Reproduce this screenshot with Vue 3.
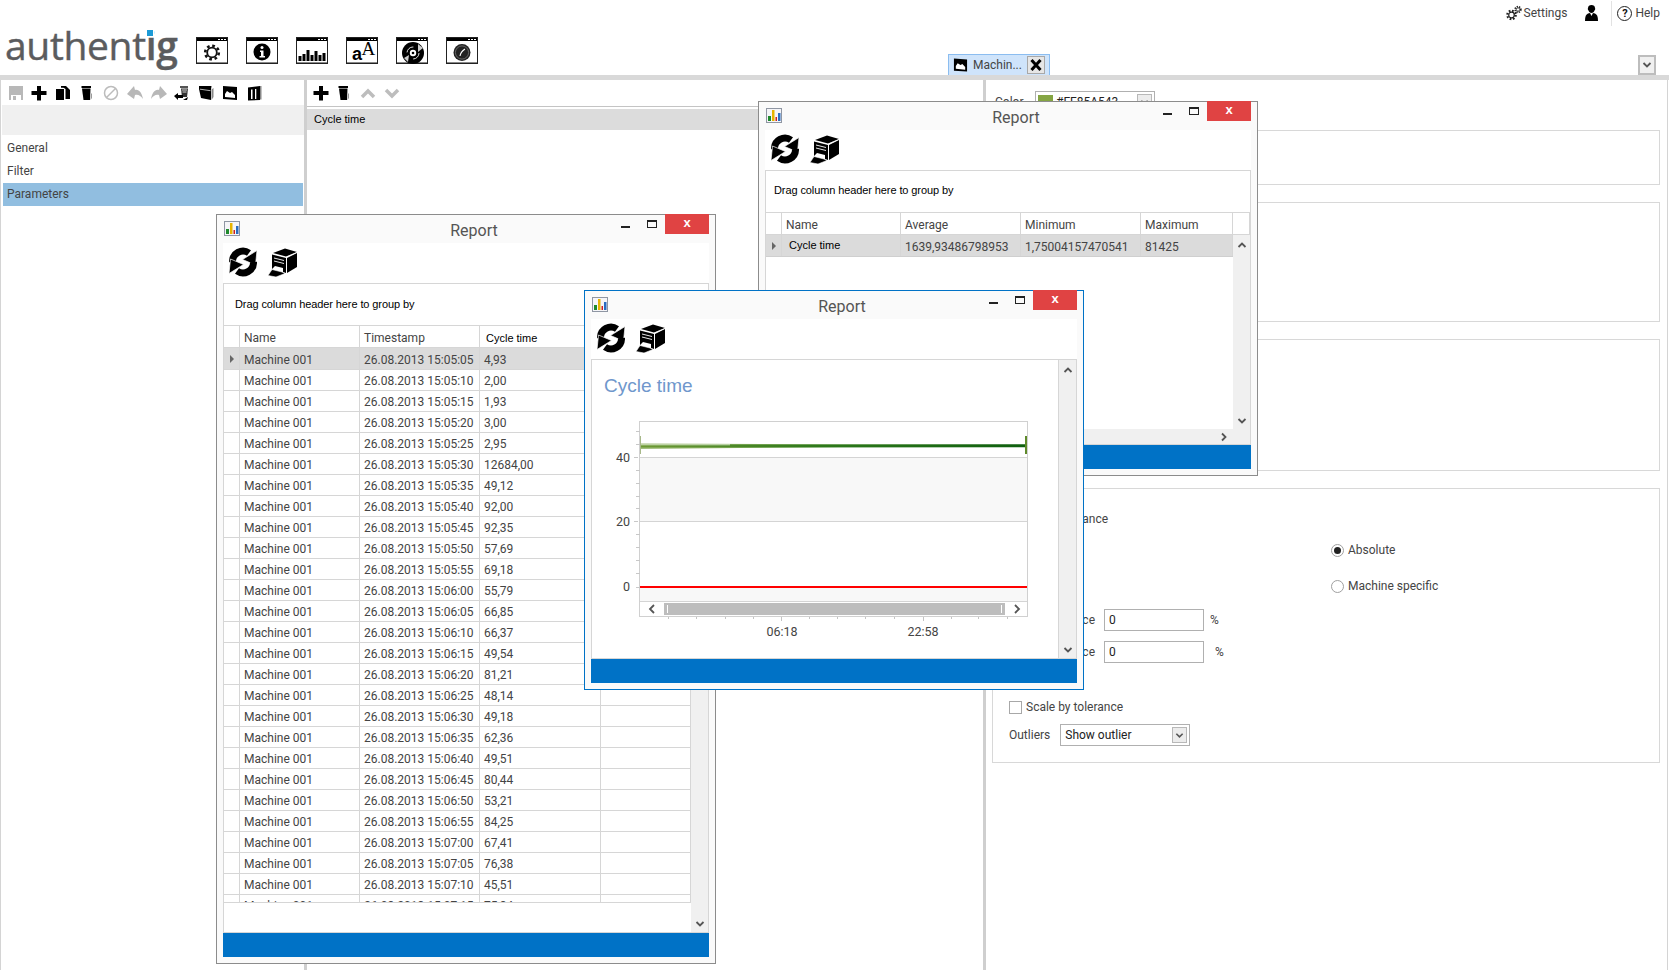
<template>
  <div class="app">
    <svg class="sprite" aria-hidden="true">
      <defs>
        <symbol id="frame" viewBox="0 0 32 27">
          <rect x="0.5" y="0.5" width="31" height="26" fill="#fff" stroke="#222" />
          <rect x="1" y="1" width="30" height="3" fill="#000" />
          <path d="M22 2h2v1h-2zM25 2h2v1h-2zM28 2h2v1h-2z" fill="#fff" />
          <path d="M1 25.500h30" stroke="#888" />
        </symbol>
        <symbol id="save" viewBox="0 0 16 16">
          <path fill="#b8b8b8" d="M1 1h14v14H1z" />
          <path fill="#fff" d="M3 10h10v5H3z" />
          <path fill="#b8b8b8" d="M5 11h3v4H5z" />
        </symbol>
        <symbol id="plus" viewBox="0 0 16 16">
          <path d="M6 1h4v5h5.500v4H10v5.500H6V10H.5V6H6z" />
        </symbol>
        <symbol id="copy" viewBox="0 0 16 16">
          <path d="M1 4h8v11H1z" />
          <path d="M6 1h5l4 4v9h-4.500V4L8.500 2.800H6z" />
        </symbol>
        <symbol id="trash" viewBox="0 0 16 16">
          <path d="M2.500 1h9.500v2H2.500z" />
          <path d="M3 3.500h8.500l-.5 11.500H4.500z" />
          <path d="M12 9l1-1v5l-1.500 2z" fill="#999" />
        </symbol>
        <symbol id="forbid" viewBox="0 0 16 16">
          <circle cx="8" cy="8" r="6.500" fill="none" stroke="#bcbcbc" stroke-width="1.500" />
          <path d="M3.500 12.500l9-9" stroke="#bcbcbc" stroke-width="1.500" />
        </symbol>
        <symbol id="undo" viewBox="0 0 16 16">
          <path fill="#b8b8b8" d="M0 9l7-8 1 4c4-1 7 3 8 9-2-3-5-5-8-4l-1 4z" />
        </symbol>
        <symbol id="redo" viewBox="0 0 16 16">
          <path fill="#b8b8b8" d="M16 9L9 1 8 5C4 4 1 8 0 14c2-3 5-5 8-4l1 4z" />
        </symbol>
        <symbol id="recycle" viewBox="0 0 16 16">
          <path d="M6 1h8v2H6z" fill="#555" />
          <path d="M7 3.500h7l-1 8.500H8z" fill="#333" />
          <path d="M8 5h5M8.500 7h4" stroke="#fff" stroke-width=".8" />
          <path d="M0 11l4-3v2h5v3H4v2z" />
          <path d="M9 15l5-3-1 3z" />
        </symbol>
        <symbol id="book" viewBox="0 0 16 16">
          <path d="M1 1h12.500L13 4.500V15L3 13 1 4z" />
          <path d="M13.500 4.500l2-1.500v9l-2 3z" fill="#888" />
          <path d="M2 4.200l10.500 1.500" stroke="#fff" stroke-width=".7" />
        </symbol>
        <symbol id="machine" viewBox="0 0 16 16">
          <path d="M1 1l14 1v13L1 14z" />
          <path d="M3 9l2-3 3 2 2-1 3 3v3L3 12z" fill="#fff" />
        </symbol>
        <symbol id="columns" viewBox="0 0 16 16">
          <path d="M2 2.500L14 1v14l-12 .5z" />
          <path d="M5 4.500h1.500V14H5zM9 4h1.300v10H9z" fill="#fff" />
          <path d="M14 1h1.500v13.500H14z" fill="#888" />
        </symbol>
        <symbol id="chevUp" viewBox="0 0 16 16">
          <path d="M2 12l6-6 6 6" fill="none" stroke="#bdbdbd" stroke-width="3.500" />
        </symbol>
        <symbol id="chevDown" viewBox="0 0 16 16">
          <path d="M2 5l6 6 6-6" fill="none" stroke="#bdbdbd" stroke-width="3.500" />
        </symbol>
        <symbol id="refresh" viewBox="0 0 28 30">
          <path d="M3.500 15A10.500 10.500 0 0 1 20 6" fill="none" stroke="#000" stroke-width="7" />
          <path d="M28 3.500L26.500 18 13.500 12.500z" stroke="#fff" stroke-width=".7" />
          <path d="M24.500 15A10.500 10.500 0 0 1 8 24" fill="none" stroke="#000" stroke-width="7" />
          <path d="M0 26.500L1.500 12 14.500 17.500z" stroke="#fff" stroke-width=".7" />
        </symbol>
        <symbol id="printer" viewBox="0 0 29 29">
          <path d="M5 5l12-4.500L29 4 18 8.500z" />
          <path d="M4 6.500l14 3.500v15l-3-1v-4l-8-2-3 3z" />
          <path d="M19 10l10-5v14l-10 6z" />
          <path d="M6 10l10 2.500M6 13l10 2.500" stroke="#fff" stroke-width=".9" />
          <path d="M18 9.300l11-5" stroke="#fff" stroke-width=".6" />
          <path d="M0 27.500l4-6 10 2.500 3 1.500L8 29z" stroke="#fff" stroke-width=".6" />
        </symbol>
        <symbol id="reportIcon" viewBox="0 0 16 15">
          <rect x=".5" y=".5" width="15" height="14" fill="#f5f5f8" stroke="#8f96a3" />
          <path d="M2 8h3v5H2z" fill="#1f8a2d" />
          <path d="M6 2h2.500v11H6z" fill="#e8b400" />
          <path d="M9.500 9H11v4H9.500z" fill="#cc2020" />
          <path d="M12 5h2.500v8H12z" fill="#2a6cc0" />
        </symbol>
        <symbol id="chev" viewBox="0 0 10 10">
          <path d="M1.500 7L5 3.500 8.500 7" fill="none" stroke="#555" stroke-width="1.800" />
        </symbol>
      </defs>
    </svg>

    <header class="topbar">
      <div class="brand">
        <div class="logo">authent<b>ig</b><i class="logo-dot"></i></div>
        <div class="apps">
          <svg class="app-icon" viewBox="0 0 32 27">
            <use href="#frame" width="32" height="27" />
            <circle cx="16" cy="15.500" r="6.800" fill="none" stroke="#111" stroke-width="2.600" stroke-dasharray="2.700 2.640" />
            <circle cx="16" cy="15.500" r="4.800" fill="none" stroke="#111" stroke-width="1.800" />
          </svg>
          <svg class="app-icon" viewBox="0 0 32 27">
            <use href="#frame" width="32" height="27" />
            <circle cx="16" cy="15" r="8.500" />
            <circle cx="16" cy="10.500" r="1.500" fill="#fff" />
            <path d="M14 13.500h3.500V19H19v1.500h-5.500V19H15v-4h-1z" fill="#fff" />
          </svg>
          <svg class="app-icon" viewBox="0 0 32 27">
            <use href="#frame" width="32" height="27" />
            <path d="M2.500 19h3v5h-3zM6.500 17h3v7h-3zM10.500 13h3v11h-3zM14.500 18h3v6h-3zM18.500 14h3v10h-3zM22.500 18h3v6h-3zM26.500 16h3v8h-3z" />
          </svg>
          <svg class="app-icon" viewBox="0 0 32 27">
            <use href="#frame" width="32" height="27" />
            <text x="6" y="23" class="icon-a">a</text>
            <text x="15.500" y="18" class="icon-aa">A</text>
          </svg>
          <svg class="app-icon" viewBox="0 0 32 27">
            <use href="#frame" width="32" height="27" />
            <circle cx="17" cy="16" r="11" />
            <circle cx="17" cy="16" r="6" fill="none" stroke="#ddd" stroke-width="1" stroke-dasharray="9 10" />
            <path d="M22 7l5 4-5 4zM12 25l-4-4 5-3z" fill="#ccc" />
            <circle cx="17" cy="16" r="3.200" fill="#fff" />
            <circle cx="17" cy="16" r="1.300" />
          </svg>
          <svg class="app-icon" viewBox="0 0 32 27">
            <use href="#frame" width="32" height="27" />
            <circle cx="16" cy="15.500" r="8.500" fill="#222" />
            <circle cx="16" cy="15.500" r="6.600" fill="none" stroke="#777" stroke-width=".8" />
            <path d="M14 19c.5-3 2-5 5-7" fill="none" stroke="#fff" stroke-width="1.100" />
          </svg>
        </div>
      </div>
      <div class="top-right">
        <nav class="links">
          <span class="link">
            <svg width="16" height="16" viewBox="0 0 16 16">
              <circle cx="5.500" cy="10" r="4.200" fill="none" stroke="#222" stroke-width="2.200" stroke-dasharray="1.700 1.600" />
              <circle cx="5.500" cy="10" r="2.800" fill="none" stroke="#222" stroke-width="1.200" />
              <circle cx="12" cy="4.500" r="2.800" fill="none" stroke="#222" stroke-width="1.800" stroke-dasharray="1.300 1" />
              <circle cx="12" cy="4.500" r="1.700" fill="none" stroke="#222" stroke-width=".8" />
            </svg>
            Settings
          </span>
          <svg class="person" width="13" height="16" viewBox="0 0 13 16">
            <path d="M3 3c0-2 1.500-3 3.500-3S10 1 10 3c.5 1 0 2-.5 2.500C9 7 8 8 6.500 8S4 7 3.500 5.500C3 5 2.500 4 3 3z" />
            <path d="M3 8.500l2-.5 1.500 3L8 8l2 .5c2 .8 3 3 3 7.500H0c0-4.500 1-6.700 3-7.500z" />
          </svg>
          <span class="link help"><em class="help-mark">?</em>Help</span>
        </nav>
        <div class="tabstrip">
          <div class="tab">
            <svg width="15" height="16"><use href="#machine" width="15" height="16" /></svg>
            <span>Machin...</span>
            <span class="tab-close">
              <svg width="14" height="14" viewBox="0 0 14 14">
                <path d="M2.500 2l9 10M11.500 2l-9 10" stroke="#000" stroke-width="3" />
              </svg>
            </span>
          </div>
          <span class="strip-menu"><svg width="10" height="10"><use href="#chev" width="10" height="10" transform="rotate(180 5 5)" /></svg></span>
        </div>
      </div>
    </header>
    <div class="band"></div>

    <main class="workspace">
      <section class="nav-col">
        <div class="tools">
          <svg v-for="icon in leftTools" :key="icon" class="tool"><use :href="'#' + icon" width="16" height="16" /></svg>
        </div>
        <div class="nav-head"></div>
        <ul class="nav">
          <li>General</li>
          <li>Filter</li>
          <li class="active">Parameters</li>
        </ul>
      </section>

      <section class="param-col">
        <div class="tools">
          <svg v-for="icon in ['plus', 'trash', 'chevUp', 'chevDown']" :key="icon" class="tool"><use :href="'#' + icon" width="16" height="16" /></svg>
        </div>
        <div class="param-list">
          <div class="param-row">Cycle time</div>
        </div>
      </section>

      <section class="props-col">
        <div class="color-row">
          <span class="color-label">Color</span>
          <span class="combo color-combo">
            <i class="swatch"></i>#FF85A543
            <span class="combo-btn"><svg width="9" height="9"><use href="#chev" width="9" height="9" transform="rotate(180 4.500 4.500)" /></svg></span>
          </span>
        </div>
        <div class="group group-a"></div>
        <div class="group group-b"></div>
        <div class="group group-c"></div>
        <div class="group group-d">
          <label class="check-row first"><i class="check"></i>Show tolerance</label>
          <label class="radio-row"><i class="radio on"></i>Absolute</label>
          <label class="radio-row second"><i class="radio"></i>Machine specific</label>
          <div class="tol-row">
            <span class="tol-label">Upper tolerance</span>
            <span class="field">0</span>
            <span class="pct">%</span>
          </div>
          <div class="tol-row lower">
            <span class="tol-label">Lower tolerance</span>
            <span class="field">0</span>
            <span class="pct wide">%</span>
          </div>
          <label class="check-row scale"><i class="check"></i>Scale by tolerance</label>
          <div class="outliers">
            <span>Outliers</span>
            <span class="combo outlier-combo">
              Show outlier
              <span class="combo-btn"><svg width="9" height="9"><use href="#chev" width="9" height="9" transform="rotate(180 4.500 4.500)" /></svg></span>
            </span>
          </div>
        </div>
      </section>
    </main>

    <!-- raw values window -->
    <div class="win win-raw">
      <div class="win-title">
        <svg class="win-icon"><use href="#reportIcon" width="16" height="15" /></svg>
        <span class="win-name">Report</span>
        <div class="win-btns"><i class="w-min"></i><i class="w-max"></i><span class="w-close">x</span></div>
      </div>
      <div class="win-tools">
        <svg class="w-refresh"><use href="#refresh" width="28" height="30" /></svg>
        <svg class="w-print"><use href="#printer" width="29" height="29" /></svg>
      </div>
      <div class="win-body">
        <div class="drag-hint">Drag column header here to group by</div>
        <div class="grid-row grid-head raw-cols">
          <span></span><span>Name</span><span>Timestamp</span><span class="black low">Cycle time</span><span></span>
        </div>
        <div class="raw-main">
          <div class="raw-rows">
            <div v-for="(row, i) in rawRows" :key="row.time" class="grid-row raw-cols" :class="{ sel: i === 0 }">
              <span class="selector"><i v-if="i === 0" class="caret"></i></span>
              <span>Machine 001</span><span>{{ row.time }}</span><span>{{ row.value }}</span><span></span>
            </div>
          </div>
          <div class="vscroll">
            <svg class="sb-up"><use href="#chev" width="10" height="10" /></svg>
            <svg class="sb-down"><use href="#chev" width="10" height="10" /></svg>
          </div>
        </div>
      </div>
      <div class="win-status"></div>
    </div>

    <!-- summary window -->
    <div class="win win-sum">
      <div class="win-title">
        <svg class="win-icon"><use href="#reportIcon" width="16" height="15" /></svg>
        <span class="win-name">Report</span>
        <div class="win-btns"><i class="w-min"></i><i class="w-max"></i><span class="w-close">x</span></div>
      </div>
      <div class="win-tools">
        <svg class="w-refresh"><use href="#refresh" width="28" height="30" /></svg>
        <svg class="w-print"><use href="#printer" width="29" height="29" /></svg>
      </div>
      <div class="win-body">
        <div class="drag-hint">Drag column header here to group by</div>
        <div class="grid-row grid-head sum-cols">
          <span></span><span>Name</span><span>Average</span><span>Minimum</span><span>Maximum</span><span></span>
        </div>
        <div class="sum-main">
          <div class="sum-rows">
            <div class="grid-row sum-cols sel">
              <span class="selector"><i class="caret"></i></span>
              <span class="black">Cycle time</span><span>1639,93486798953</span><span>1,75004157470541</span><span>81425</span>
            </div>
          </div>
          <div class="vscroll">
            <svg class="sb-up"><use href="#chev" width="10" height="10" /></svg>
            <svg class="sb-down"><use href="#chev" width="10" height="10" /></svg>
          </div>
        </div>
        <div class="hscroll">
          <svg class="sb-right"><use href="#chev" width="10" height="10" /></svg>
        </div>
      </div>
      <div class="win-status"></div>
    </div>

    <!-- chart window -->
    <div class="win win-chart">
      <div class="win-title">
        <svg class="win-icon"><use href="#reportIcon" width="16" height="15" /></svg>
        <span class="win-name">Report</span>
        <div class="win-btns"><i class="w-min"></i><i class="w-max"></i><span class="w-close">x</span></div>
      </div>
      <div class="win-tools">
        <svg class="w-refresh"><use href="#refresh" width="28" height="30" /></svg>
        <svg class="w-print"><use href="#printer" width="29" height="29" /></svg>
      </div>
      <div class="win-body chart-body">
        <div class="chart-pane">
          <div class="chart-title">Cycle time</div>
          <svg class="chart" viewBox="0 0 468 260">
            <defs>
              <linearGradient id="lineFill" x1="0" x2="1" y1="0" y2="0">
                <stop offset="0" stop-color="#6e9a34" />
                <stop offset="0.45" stop-color="#2f7a1c" />
                <stop offset="1" stop-color="#0f5f0f" />
              </linearGradient>
            </defs>
            <rect x="49.500" y="23.500" width="388" height="195" fill="#fff" stroke="#d0d0d0" />
            <rect x="50" y="60" width="387" height="63" fill="#f8f8f8" />
            <rect x="50" y="189" width="387" height="14" fill="#f8f8f8" />
            <path d="M50 59.500h387M50 123.500h387M50 203.500h387" stroke="#d4d4d4" />
            <path v-for="t in yTicks" :key="t" :d="`M${t % 64 === 59 % 64 ? 44 : 46} ${t}.5h4`" stroke="#c8c8c8" />
            <path d="M50 45.500L250 46.500 437 47v2L250 49 50 51z" fill="#7ea64a" opacity=".75" />
            <path d="M50 48L437 47.800" stroke="url(#lineFill)" stroke-width="3" />
            <path d="M50 46.800h90" stroke="#eef4e4" stroke-width=".8" />
            <path d="M50.500 38v18" stroke="#a8b98a" />
            <path d="M436 38v18" stroke="#5e8a2a" stroke-width="2" />
            <path d="M50 189h387" stroke="#f00" stroke-width="2" />
            <rect x="74" y="205" width="341" height="12" fill="#bdbdbd" />
            <path d="M77.500 207v8M411.500 207v8" stroke="#fff" />
            <path d="M64 207l-4 4 4 4M425 207l4 4-4 4" fill="none" stroke="#555" stroke-width="1.800" />
            <path v-for="x in xTicks" :key="x" :d="`M${x}.5 219v${x === 191 || x === 333 ? 4 : 2}`" stroke="#c4c4c4" />
            <text x="40" y="64" class="axis" text-anchor="end">40</text>
            <text x="40" y="128" class="axis" text-anchor="end">20</text>
            <text x="40" y="193" class="axis" text-anchor="end">0</text>
            <text x="192" y="238" class="axis" text-anchor="middle">06:18</text>
            <text x="333" y="238" class="axis" text-anchor="middle">22:58</text>
          </svg>
        </div>
        <div class="vscroll full">
          <svg class="sb-up"><use href="#chev" width="10" height="10" /></svg>
          <svg class="sb-down"><use href="#chev" width="10" height="10" /></svg>
        </div>
      </div>
      <div class="win-status"></div>
    </div>
  </div>
</template>

<script setup>
const leftTools = ["save", "plus", "copy", "trash", "forbid", "undo", "redo", "recycle", "book", "machine", "columns"]

const cycleValues = [
  "4,93", "2,00", "1,93", "3,00", "2,95", "12684,00", "49,12", "92,00", "92,35",
  "57,69", "69,18", "55,79", "66,85", "66,37", "49,54", "81,21", "48,14", "49,18",
  "62,36", "49,51", "80,44", "53,21", "84,25", "67,41", "76,38", "45,51", "75,84",
]

function stamp(i) {
  const total = 15 * 3600 + 5 * 60 + 5 + i * 5
  const m = String(Math.floor(total / 60) % 60).padStart(2, "0")
  const s = String(total % 60).padStart(2, "0")
  return `26.08.2013 15:${m}:${s}`
}

const rawRows = cycleValues.map((value, i) => ({ time: stamp(i), value }))

// ticks of the chart, in svg units
const yTicks = [59 - 12.8 * 2, 59 - 12.8, 59, 72, 85, 98, 110, 123, 136, 149, 162, 175, 189].map(Math.round)
const xTicks = [78, 106, 135, 163, 191, 219, 247, 275, 304, 333, 361, 388, 417]
</script>

<style>
html, body {
  margin: 0;
  background: #fff;
  overflow: hidden;
}
</style>

<style scoped>
.app {
  position: relative;
  width: 1669px;
  height: 970px;
  overflow: hidden;
  background: #fff;
  font-family: Roboto, "Open Sans", sans-serif;
  font-size: 12px;
  color: #444;
}

.sprite {
  position: absolute;
  width: 0;
  height: 0;
}

.topbar {
  display: grid;
  grid-template-columns: 948px 1fr;
  height: 75px;
}

.brand {
  display: flex;
  padding-left: 5px;
}

.logo {
  position: relative;
  width: 191px;
  margin-top: 19px;
  font-family: "Open Sans", sans-serif;
  font-size: 39px;
  line-height: 52px;
  letter-spacing: -0.35px;
  color: #5b5c5e;
  height: 52px;
  -webkit-text-stroke: 0.4px #5b5c5e;
}

.logo b {
  font-weight: 600;
}

.logo-dot {
  position: absolute;
  left: 142px;
  top: 11px;
  width: 6px;
  height: 6px;
  background: #1c9ad6;
  box-shadow: 0 0 0 1px #fff;
}

.apps {
  display: flex;
  gap: 18px;
  padding-top: 37px;
}

.app-icon {
  width: 32px;
  height: 27px;
}

.icon-a {
  font: 700 18px "Liberation Sans", sans-serif;
}

.icon-aa {
  font: 400 19px "Liberation Serif", serif;
}

.top-right {
  display: flex;
  flex-direction: column;
  justify-content: space-between;
}

.links {
  display: flex;
  justify-content: flex-end;
  align-items: center;
  height: 26px;
  padding-right: 9px;
}

.link {
  display: flex;
  align-items: center;
  gap: 2px;
}

.person {
  margin: 0 13px 0 18px;
}

.help {
  border-left: 1px solid #e2e2e2;
  height: 25px;
  padding-left: 5px;
  gap: 3px;
}

.help-mark {
  display: inline-block;
  width: 13px;
  height: 13px;
  border: 1.500px solid #222;
  border-radius: 50%;
  font-style: normal;
  font-weight: 700;
  font-size: 11px;
  line-height: 13px;
  text-align: center;
  color: #111;
}

.tabstrip {
  display: flex;
  align-items: flex-end;
  justify-content: space-between;
  padding-right: 13px;
}

.tab {
  display: flex;
  align-items: center;
  box-sizing: border-box;
  width: 102px;
  height: 21px;
  padding-left: 4px;
  gap: 5px;
  background: #cfe4fb;
  border: 1px solid #8bbdf0;
  border-bottom: 0;
  font-size: 12px;
}

.tab-close {
  display: flex;
  align-items: center;
  justify-content: center;
  width: 16px;
  height: 16px;
  background: #e6e6e6;
  border: 1px solid #a8a8a8;
}

.strip-menu {
  display: flex;
  align-items: center;
  justify-content: center;
  box-sizing: border-box;
  width: 18px;
  height: 20px;
  border: 2px solid #bdbdbd;
  background: #f0f0f0;
}

.band {
  height: 5px;
  background: #d9d9d9;
}

.workspace {
  display: grid;
  grid-template-columns: 304px 681px 1fr;
  height: 890px;
  box-sizing: border-box;
  border-left: 1px solid #d4d4d4;
  border-right: 1px solid #d4d4d4;
  width: 1668px;
}

.nav-col {
  border-right: 3px solid #cfcfcf;
  margin-right: -2px;
  padding-left: 1px;
}

.tools {
  display: flex;
  align-items: center;
  gap: 7.850px;
  height: 25px;
  padding-left: 5.500px;
}

.tool {
  width: 16px;
  height: 16px;
  flex: none;
}

.nav-head {
  height: 30px;
  background: #f0f0f0;
}

.nav {
  list-style: none;
  margin: 0;
  padding: 2px 0 0;
}

.nav li {
  height: 23px;
  line-height: 23px;
  padding-left: 5px;
}

.nav li.active {
  margin: 0 1px 0 1px;
  padding-left: 4px;
  background: #91bee0;
}

.param-col {
  margin-left: 2px;
  border-right: 3px solid #cfcfcf;
}

.param-list {
  box-sizing: border-box;
  height: 140px;
  border-top: 1px solid #c4c4c4;
  padding-top: 2px;
  margin-top: 1px;
}

.param-row {
  height: 21px;
  line-height: 21px;
  padding-left: 7px;
  background: #dcdcdc;
  font-family: "Liberation Sans", sans-serif;
  font-size: 11px;
  color: #000;
}

.props-col {
  padding: 11px 7px 0 6px;
}

.color-row {
  display: flex;
  align-items: center;
  height: 22px;
  margin-bottom: 17px;
}

.color-label {
  width: 43px;
  padding-left: 3px;
  box-sizing: border-box;
}

.combo {
  position: relative;
  display: flex;
  align-items: center;
  box-sizing: border-box;
  height: 22px;
  border: 1px solid #b0b0b0;
}

.color-combo {
  width: 120px;
  padding-left: 2px;
  color: #222;
}

.swatch {
  width: 15px;
  height: 15px;
  margin-right: 3px;
  background: #85a543;
}

.combo-btn {
  position: absolute;
  right: 2px;
  top: 2px;
  bottom: 2px;
  width: 13px;
  display: flex;
  align-items: center;
  justify-content: center;
  background: #ececec;
  border: 1px solid #b8b8b8;
}

.group {
  box-sizing: border-box;
  border: 1px solid #d8d8d8;
  margin-bottom: 17px;
}

.group-a {
  height: 55px;
}

.group-b {
  height: 120px;
}

.group-c {
  height: 132px;
}

.group-d {
  height: 275px;
  padding: 21px 16px 0;
}

.check-row,
.radio-row {
  display: flex;
  align-items: center;
  height: 18px;
  gap: 4px;
}

.check {
  box-sizing: border-box;
  width: 13px;
  height: 13px;
  border: 1px solid #a8a8a8;
  background: #fff;
}

.radio-row {
  margin: 13px 0 0 322px;
  gap: 4px;
}

.radio-row.second {
  margin-top: 18px;
}

.radio {
  box-sizing: border-box;
  display: flex;
  align-items: center;
  justify-content: center;
  width: 13px;
  height: 13px;
  border: 1px solid #a0a0a0;
  border-radius: 50%;
  background: #fff;
}

.radio.on::after {
  content: "";
  width: 7px;
  height: 7px;
  border-radius: 50%;
  background: #222;
}

.tol-row {
  display: flex;
  align-items: center;
  margin-top: 14px;
}

.tol-row.lower {
  margin-top: 10px;
}

.tol-label {
  width: 86px;
  margin-right: 9px;
  text-align: right;
  white-space: nowrap;
}

.field {
  box-sizing: border-box;
  width: 100px;
  height: 22px;
  line-height: 20px;
  padding-left: 4px;
  border: 1px solid #b0b0b0;
  color: #222;
}

.pct {
  margin-left: 6px;
}

.pct.wide {
  margin-left: 11px;
}

.check-row.scale {
  margin-top: 35px;
}

.outliers {
  display: flex;
  align-items: center;
  gap: 10px;
  margin-top: 8px;
}

.outlier-combo {
  width: 130px;
  padding-left: 4px;
  color: #222;
}

.win {
  position: absolute;
  display: flex;
  flex-direction: column;
  box-sizing: border-box;
  padding: 0 6px 6px;
  background: #fafafa;
  border: 1px solid #8c8c8c;
}

.win-raw {
  left: 216px;
  top: 214px;
  width: 500px;
  height: 750px;
}

.win-sum {
  left: 758px;
  top: 101px;
  width: 500px;
  height: 375px;
}

.win-chart {
  left: 584px;
  top: 290px;
  width: 500px;
  height: 400px;
  border-color: #0072c6;
}

.win-title {
  display: grid;
  grid-template-columns: 1fr auto 1fr;
  height: 28px;
  flex: none;
}

.win-icon {
  width: 16px;
  height: 15px;
  margin: 6px 0 0 1px;
}

.win-name {
  padding: 6px 0 0 16px;
  font-size: 16px;
  line-height: 20px;
  color: #555;
}

.win-btns {
  display: flex;
  justify-content: flex-end;
  align-items: flex-start;
  margin-top: -1px;
}

.w-min {
  width: 9px;
  height: 2px;
  margin: 12px 17px 0 0;
  background: #222;
}

.w-max {
  box-sizing: border-box;
  width: 10px;
  height: 8px;
  margin: 6px 8px 0 0;
  border: 1px solid #222;
  border-top-width: 2px;
}

.w-close {
  width: 44px;
  height: 20px;
  background: #e04343;
  color: #fff;
  font: 700 13px/18px "Liberation Sans", sans-serif;
  text-align: center;
}

.win-tools {
  display: flex;
  align-items: center;
  gap: 10px;
  box-sizing: border-box;
  height: 40px;
  flex: none;
  padding: 0 0 2px 6px;
  background: #fff;
}

.w-refresh {
  width: 28px;
  height: 30px;
}

.w-print {
  width: 29px;
  height: 29px;
  margin-left: 1px;
}

.win-body {
  flex: 1;
  min-height: 0;
  display: flex;
  flex-direction: column;
  box-sizing: border-box;
  background: #fff;
  border: 1px solid #d6d6d6;
  border-bottom-width: 1px;
}

.win-status {
  height: 24px;
  flex: none;
  background: #0072c6;
}

.drag-hint {
  height: 41px;
  flex: none;
  padding-left: 11px;
  line-height: 41px;
  font-family: "Liberation Sans", sans-serif;
  font-size: 11px;
  letter-spacing: -0.1px;
  color: #000;
}

.win-sum .drag-hint {
  padding-left: 8px;
  line-height: 39px;
}

.grid-row {
  display: grid;
  height: 21px;
  line-height: 21px;
  box-sizing: border-box;
  border-bottom: 1px solid #d6d6d6;
}

.grid-row span {
  border-right: 1px solid #d6d6d6;
  padding: 1px 0 0 4px;
  white-space: nowrap;
  overflow: hidden;
}

.grid-row.grid-head {
  height: 23px;
  line-height: 23px;
  border-top: 1px solid #d6d6d6;
  flex: none;
}

.grid-row span.black {
  padding-left: 6px;
}

.grid-head span.low {
  padding-top: 1px;
}

.raw-cols {
  grid-template-columns: 16px 120px 120px 121px 1fr;
}

.sum-cols {
  grid-template-columns: 16px 119px 120px 120px 92px 1fr;
}

.black {
  font-family: "Liberation Sans", sans-serif;
  font-size: 11px;
  color: #000;
}

.sum-rows .grid-row span.black {
  padding: 0 0 0 7px;
  line-height: 20px;
}

.grid-row span.selector {
  display: flex;
  align-items: center;
  padding: 0 0 0 6px;
}

.caret {
  width: 0;
  height: 0;
  border-left: 4px solid #666;
  border-top: 4px solid transparent;
  border-bottom: 4px solid transparent;
}

.grid-row.sel {
  height: 22px;
  line-height: 22px;
  background: #dbdbdb;
}

.raw-main {
  flex: 1;
  min-height: 0;
  display: flex;
}

.raw-rows {
  flex: 1;
  height: 554px;
  overflow: hidden;
  border-bottom: 1px solid #d6d6d6;
}

.vscroll {
  position: relative;
  width: 17px;
  flex: none;
  background: #f0f0f0;
}

.sb-up,
.sb-down,
.sb-right {
  position: absolute;
  width: 10px;
  height: 10px;
}

.sb-up {
  left: 4px;
  top: 5px;
}

.sb-down {
  left: 4px;
  bottom: 3px;
  transform: rotate(180deg);
}

.sum-main {
  display: flex;
  height: 194px;
  flex: none;
}

.sum-rows {
  flex: 1;
}

.sum-rows .grid-row {
  border-bottom: 1px solid #cfcfcf;
}

.hscroll {
  position: relative;
  flex: 1;
  background: #f0f0f0;
}

.sb-right {
  right: 21px;
  top: 3px;
  transform: rotate(90deg);
}

.chart-body {
  flex-direction: row;
}

.chart-pane {
  flex: 1;
  min-width: 0;
  background: #fff;
  border-right: 1px solid #d6d6d6;
}

.chart-title {
  margin: 14px 0 0 12px;
  height: 24px;
  line-height: 24px;
  font-family: "Liberation Sans", sans-serif;
  font-size: 19px;
  color: #6f97cc;
}

.chart {
  display: block;
  width: 468px;
  height: 260px;
  margin-left: -2px;
}

.axis {
  font-family: Roboto, sans-serif;
  font-size: 12.500px;
  fill: #444;
}
</style>
